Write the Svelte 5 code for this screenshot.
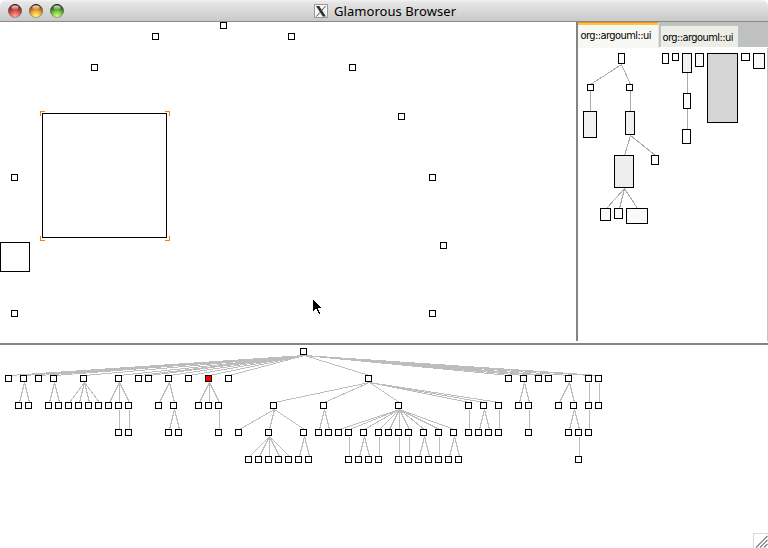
<script>
  const scatter = [
    [220, 22], [152, 33], [288, 33], [91, 64], [349, 64], [398, 113],
    [429, 174], [440, 242], [429, 310], [11, 174], [11, 310]
  ];

  // left edge, top edge, width, height, fill
  const classes = [
    [618, 53, 7, 11, '#fff'], [587, 84, 7, 7, '#fff'], [626, 84, 7, 7, '#fff'],
    [583, 111, 14, 27, '#f2f2f2'], [625, 111, 10, 24, '#f0f0f0'],
    [614, 155, 20, 33, '#ededed'], [651, 155, 8, 10, '#fff'],
    [600, 208, 11, 13, '#fcfcfc'], [614, 208, 9, 11, '#fcfcfc'], [626, 208, 22, 16, '#f9f9f9'],
    [662, 53, 7, 11, '#fff'], [672, 53, 7, 8, '#fff'], [682, 53, 10, 20, '#f2f2f2'],
    [695, 53, 9, 14, '#fafafa'], [707, 53, 31, 70, '#d5d5d5'], [741, 53, 9, 8, '#fff'],
    [753, 53, 12, 16, '#f9f9f9'], [683, 93, 8, 16, '#fcfcfc'], [682, 129, 9, 15, '#fff']
  ];
  const classEdges = [
    [621.5, 64.5, 590.5, 84.5], [621.5, 64.5, 630.5, 84.5],
    [590.5, 91, 590.5, 111], [630.5, 91, 630.5, 111],
    [630.5, 135.5, 624.5, 155.5], [630.5, 135.5, 655.5, 155.5],
    [624.5, 188.5, 606.5, 208.5], [624.5, 188.5, 619.5, 208.5], [624.5, 188.5, 637.5, 208.5],
    [687.5, 73, 687.5, 93], [687.5, 109, 687.5, 129]
  ];

  const rowTop = [348, 375, 402, 429, 456];
  const levels = [
    { 300: [5, 20, 35, 50, 80, 115, 135, 145, 165, 185, 205, 225, 365, 505, 520, 535, 545, 565, 585, 595] },
    {
      20: [15, 25], 50: [45, 55], 80: [65, 75, 85, 95], 115: [105, 115, 125], 165: [155, 170],
      205: [195, 205, 215], 365: [270, 320, 395, 465, 480, 495], 520: [515, 525],
      565: [555, 570], 585: [585], 595: [595]
    },
    {
      115: [115], 125: [125], 170: [165, 175], 215: [215], 270: [235, 265, 300], 320: [315, 325],
      395: [335, 345, 360, 375, 385, 395, 405, 420, 435, 450], 465: [465], 480: [475, 485],
      495: [495], 525: [525], 570: [565, 575], 585: [585]
    },
    {
      265: [245, 255, 265, 275, 285], 300: [295, 305], 345: [345], 360: [355, 365], 375: [375],
      395: [395], 405: [405], 420: [415, 425], 435: [435], 450: [445, 455], 575: [575]
    }
  ];
  const nodes = [[300, 348, false]];
  const edges = [];
  levels.forEach((level, d) => {
    for (const [parent, kids] of Object.entries(level)) {
      for (const k of kids) {
        nodes.push([k, rowTop[d + 1], d === 0 && k === 205]);
        edges.push([+parent + 4.5, rowTop[d] + 7.5, k + 4.5, rowTop[d + 1] + 0.5]);
      }
    }
  });
</script>

<div class="window">
  <header class="titlebar">
    <div class="lights">
      <svg width="60" height="18" viewBox="0 0 60 18">
        <defs>
          <linearGradient id="rim" x2="0" y2="1">
            <stop offset="0" stop-color="#222" /><stop offset=".5" stop-color="#555" stop-opacity=".7" /><stop offset="1" stop-color="#777" stop-opacity=".6" />
          </linearGradient>
          <radialGradient id="red" cy=".9" r=".75"><stop offset="0" stop-color="#ffaca0" /><stop offset=".5" stop-color="#e05a50" /><stop offset="1" stop-color="#8c1c1c" /></radialGradient>
          <radialGradient id="amber" cy=".9" r=".75"><stop offset="0" stop-color="#fff888" /><stop offset=".5" stop-color="#f5b238" /><stop offset="1" stop-color="#a05008" /></radialGradient>
          <radialGradient id="green" cy=".9" r=".75"><stop offset="0" stop-color="#d0ff90" /><stop offset=".5" stop-color="#7cc840" /><stop offset="1" stop-color="#285e10" /></radialGradient>
          <linearGradient id="gloss" x2="0" y2="1"><stop offset="0" stop-color="#fff" stop-opacity=".85" /><stop offset="1" stop-color="#fff" stop-opacity=".15" /></linearGradient>
        </defs>
        {#each ['red', 'amber', 'green'] as color, i}
          <circle cx={8 + i * 21} cy="9" r="6.5" fill="url(#{color})" stroke="url(#rim)" />
          <ellipse cx={8 + i * 21} cy="5.6" rx="3.6" ry="2.1" fill="url(#gloss)" />
        {/each}
      </svg>
    </div>
    <div class="title">
      <svg width="14" height="14" viewBox="0 0 14 14">
        <rect x=".5" y=".5" width="13" height="13" fill="#f8f8f8" stroke="#999" />
        <path d="M2 2H5.3L12 12.5H8.7Z" fill="#333" />
        <path d="M11.5 2L7.6 6.6M6 8.4L2.3 12.5" stroke="#444" stroke-width="1" />
      </svg>
      <svg class="caption" width="124" height="20">
        <text x="0" y="14" textLength="122" lengthAdjust="spacing">Glamorous Browser</text>
      </svg>
    </div>
  </header>

  <div class="upper">
    <section class="stage">
      <svg width="576" height="321" viewBox="0 22 576 321" shape-rendering="crispEdges">
        {#each scatter as [x, y]}
          <rect class="box" x={x + 0.5} y={y + 0.5} width="6" height="6" />
        {/each}
        <rect class="box" x="42.5" y="113.5" width="124" height="124" />
        <rect class="box" x=".5" y="242.5" width="29" height="29" />
        <path class="corners" d="M40.5 116V111.5H45M165 111.5H169.5V116M40.5 236V240.5H45M165 240.5H169.5V236" />
        <path d="M313 300V311H314V310H315V309H317V311H318V313H319V314H320V312H319V310H318V308H321V307H320V306H319V305H318V304H317V303H316V302H315V301H314V300Z" />
      </svg>
    </section>
    <section class="side">
      <nav class="tabs">
        <div class="tab active"><svg width="78" height="22"><text x="2.5" y="16" textLength="71">org::argouml::ui</text></svg></div>
        <div class="tab"><svg width="76" height="20"><text x="1.5" y="15" textLength="71">org::argouml::ui</text></svg></div>
      </nav>
      <svg class="hierarchy" width="189" height="293" viewBox="578 48 189 293" shape-rendering="crispEdges">
        {#each classEdges as [x1, y1, x2, y2]}
          <line {x1} {y1} {x2} {y2} stroke="#aaa" />
        {/each}
        {#each classes as [x, y, w, h, fill]}
          <rect x={x + 0.5} y={y + 0.5} width={w - 1} height={h - 1} {fill} stroke="#000" />
        {/each}
      </svg>
    </section>
  </div>

  <section class="overview">
    <svg width="768" height="203" viewBox="0 345 768 203" shape-rendering="crispEdges">
      {#each edges as [x1, y1, x2, y2]}
        <line {x1} {y1} {x2} {y2} stroke="#bdbdbd" />
      {/each}
      {#each nodes as [x, y, selected]}
        <rect class="box" class:selected x={x + 0.5} y={y + 0.5} width="6" height="6" />
      {/each}
      <path d="M753.5 548V533.5H768" fill="none" stroke="#d8d8d8" />
      <g shape-rendering="auto" stroke="#777" stroke-width="1.1">
        <path d="M756 547.5L767.5 536M760 547.5L767.5 540M764 547.5L767.5 544" />
      </g>
    </svg>
  </section>
</div>

<style>
  :global(body) { margin: 0; background: #fff; }
  svg { display: block; }
  .window { width: 768px; height: 548px; display: flex; flex-direction: column; background: #fff; overflow: hidden; }
  .titlebar {
    box-sizing: border-box; height: 22px; flex: none; display: flex;
    border-bottom: 1px solid #8a8a8a; border-radius: 6px 6px 0 0;
    background: linear-gradient(#f4f4f4, #e6e6e6 2px, #c9c9c9);
  }
  .lights { width: 314px; padding: 2px 0 0 7px; box-sizing: border-box; }
  .title { display: flex; gap: 6px; padding-top: 4px; }
  .caption { margin-top: -2px; overflow: visible; font: 13px "Noto Sans", "Open Sans", sans-serif; }
  .upper { height: 321px; flex: none; display: flex; }
  .stage { width: 576px; height: 321px; }
  .box { fill: #fff; stroke: #000; }
  .box.selected { fill: #f00; }
  .corners { fill: none; stroke: #ff8000; }
  .side { width: 192px; height: 319px; box-sizing: border-box; border-left: 2px solid #848484; }
  .tabs { height: 26px; display: flex; align-items: flex-start; background: linear-gradient(#c0c0c0 24px, #b6c9c5 24px, #b6c9c5 25px, #fff 25px); }
  .tab {
    box-sizing: border-box; width: 79px; height: 22px; margin-top: 3px; overflow: hidden;
    border: 1px solid #b2cbc7; border-bottom: 0; background: #ecede6;
    font: 11px "DejaVu Sans Condensed", "DejaVu Sans", sans-serif; font-stretch: condensed;
  }
  .tab + .tab { margin-left: 1px; }
  .tab.active {
    width: 81px; height: 26px; margin-top: 0; border: 0; border-top: 1px solid #e58a2d;
    border-right: 1px solid #dce6e2; background: linear-gradient(#ffc33c 2px, #f7f8f3 2px);
  }
  .hierarchy { border-right: 1px solid #b6c9c5; }
  .overview { height: 205px; box-sizing: border-box; border-top: 2px solid #848484; }
</style>
